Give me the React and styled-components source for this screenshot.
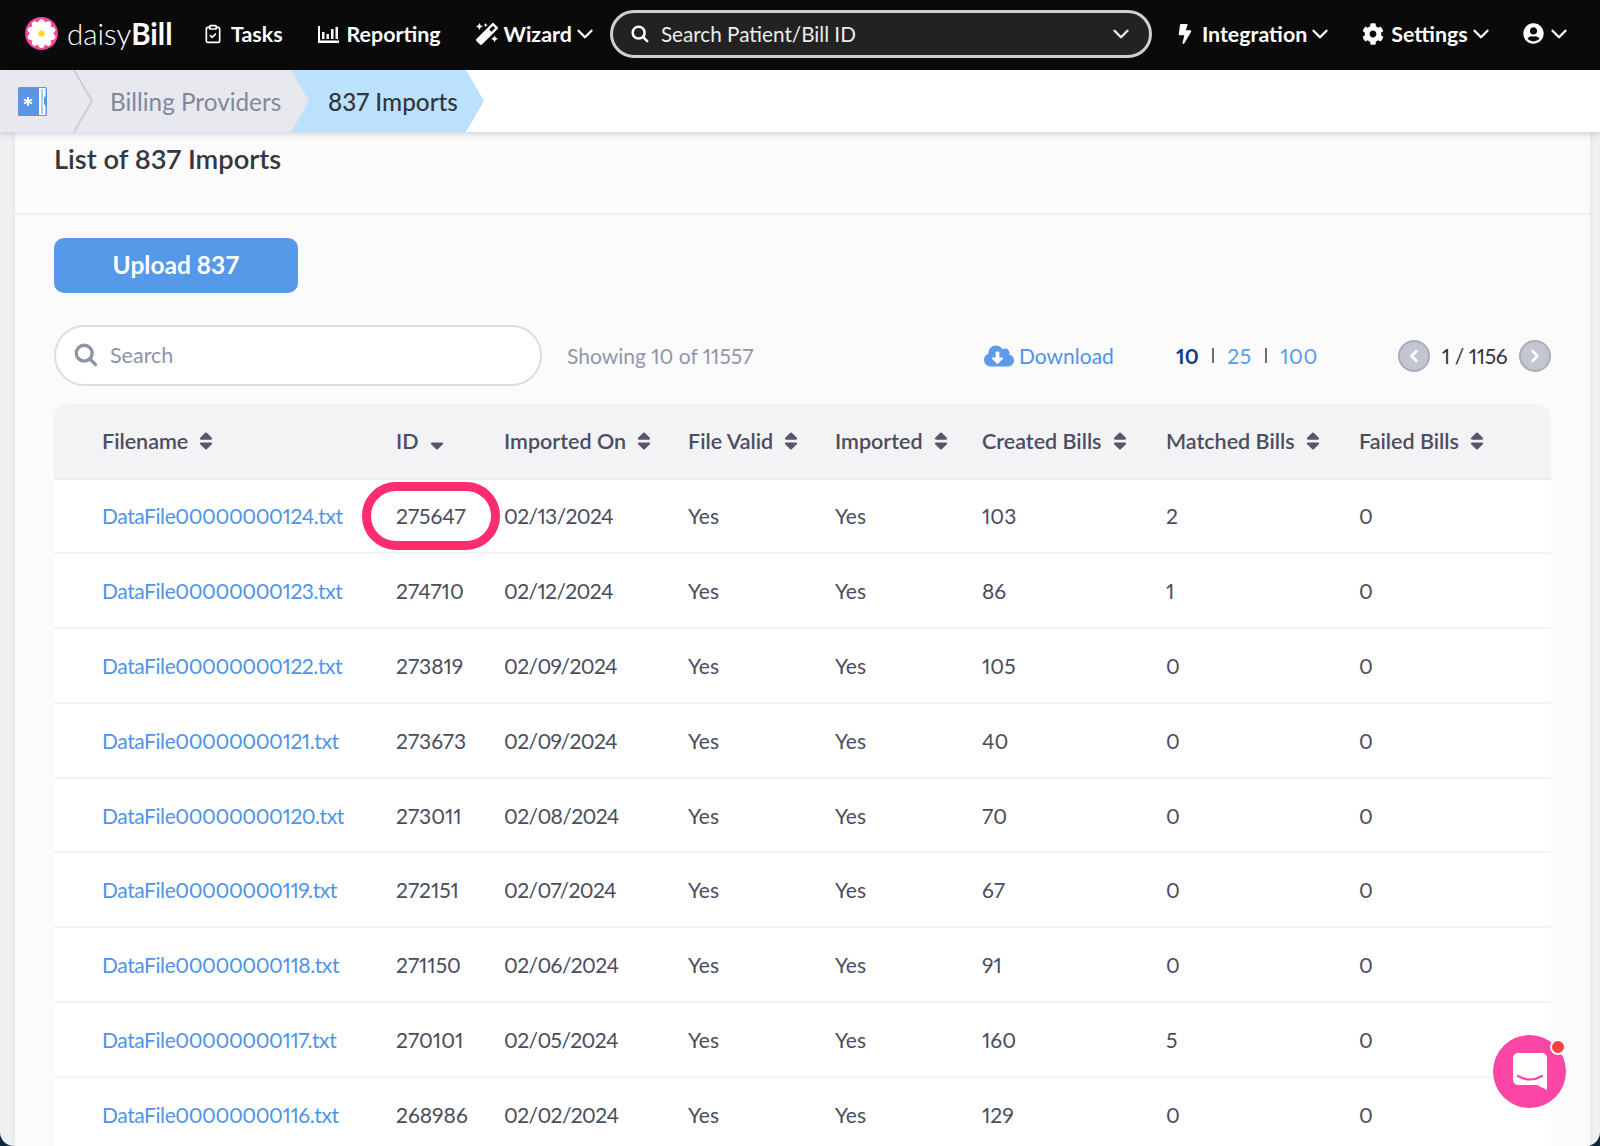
import React from "react";
import styled, { createGlobalStyle } from "styled-components";
import { ChevronDown, ChevronLeft, ChevronRight, ClipboardCheck } from "lucide-react";
import { FaBolt, FaCog, FaCloudDownloadAlt, FaMagic, FaSort, FaSortDown, FaUserCircle } from "react-icons/fa";

const FONT = `"Lato", "Open Sans", sans-serif`;

const GlobalStyle = createGlobalStyle`
    html, body {
        margin: 0;
        height: 1146px;
        overflow: hidden;
        background: #0c2a3e;
    }
    * { box-sizing: border-box; }
`;

const Screen = styled.div`
    width: 1600px;
    height: 1146px;
    position: relative;
    overflow: hidden;
    display: flex;
    flex-direction: column;
    font-family: ${FONT};
    font-variant-numeric: proportional-nums;
    background: #f0f0f3;
    border-radius: 0 0 14px 14px;
`;

const TopBar = styled.header`
    height: 70px;
    flex: none;
    background: #0a0a0a;
    display: flex;
    align-items: center;
    padding: 0 0 3px 25px;
    color: #fff;
`;

const Logo = styled.div`
    display: flex;
    align-items: center;
    width: 178px;
    flex: none;
`;

const LogoText = styled.span`
    font-size: 29.5px;
    font-weight: 300;
    margin-left: 9px;
    & b { font-weight: 700; }
`;

const NavItem = styled.div`
    display: flex;
    align-items: center;
    font-size: 21.4px;
    font-weight: 700;
    flex: none;
    margin-left: ${(p) => p.$left || 0}px;
    & svg { flex: none; }
    & > svg:first-child { margin-right: ${(p) => p.$gap ?? 8}px; }
`;

const NavCaret = styled(ChevronDown).attrs({ size: 26, strokeWidth: 2.2 })``;

const SearchBar = styled.div`
    width: 542px;
    height: 48px;
    flex: none;
    margin-left: 12px;
    border: 3px solid #cfcfcf;
    border-radius: 24px;
    background: #222;
    display: flex;
    align-items: center;
    padding: 0 15px 0 18px;
    gap: 12px;
    font-size: 20.7px;
    color: #ececec;
    & span { flex: 1; }
`;

const Crumbs = styled.nav`
    height: 62px;
    flex: none;
    background: #fff;
    display: flex;
    position: relative;
    z-index: 2;
    box-shadow: 0 2px 6px rgba(60, 60, 90, 0.22);
`;

const Crumb = styled.div`
    height: 100%;
    width: ${(p) => p.$width}px;
    margin-right: -18px;
    flex: none;
    position: relative;
    z-index: ${(p) => p.$z};
    padding-left: ${(p) => p.$pad}px;
    display: flex;
    align-items: center;
    font-size: 24.3px;
    color: ${(p) => (p.$active ? "#33343f" : "#83879c")};
    font-weight: ${(p) => (p.$active ? 500 : 400)};
    background: ${(p) => (p.$active ? "#bbe1fd" : p.$line ? "#c9ccd5" : "#e7e9ee")};
    clip-path: polygon(0 0, calc(100% - 18px) 0, 100% 50%, calc(100% - 18px) 100%, 0 100%);
    ${(p) => p.$line && `
        &::before {
            content: "";
            position: absolute;
            inset: 0 2px 0 0;
            background: #e7e9ee;
            clip-path: polygon(0 0, calc(100% - 18px) 0, 100% 50%, calc(100% - 18px) 100%, 0 100%);
        }
        & > * { position: relative; }
    `}
`;

const Card = styled.main`
    flex: 1;
    margin: 0 10px 0 15px;
    background: #fbfbfc;
    min-height: 0;
    box-shadow: 0 0 6px rgba(60, 60, 90, 0.08);
`;

const CardHead = styled.div`
    height: 83px;
    padding: 10px 0 0 39px;
    border-bottom: 2px solid #eeeef0;
`;

const Title = styled.h1`
    margin: 0;
    font-size: 27.3px;
    line-height: 34px;
    font-weight: 600;
    color: #35363f;
`;

const CardBody = styled.div`
    padding: 23px 39px 0;
`;

const UploadButton = styled.button`
    display: block;
    width: 244px;
    height: 55px;
    border: 0;
    border-radius: 10px;
    background: #5599e8;
    color: #fff;
    font-family: ${FONT};
    font-size: 24.5px;
    font-weight: 700;
    padding: 0 0 2px;
`;

const Toolbar = styled.div`
    display: flex;
    align-items: center;
    margin-top: 32px;
    height: 61px;
`;

const SearchBox = styled.div`
    width: 488px;
    height: 61px;
    flex: none;
    border: 2px solid #dcdce2;
    border-radius: 31px;
    background: #fff;
    display: flex;
    align-items: center;
    padding: 0 0 2px 18px;
    gap: 12px;
    font-size: 21.5px;
    color: #8f93a6;
`;

const Showing = styled.span`
    margin-left: 25px;
    width: 417px;
    flex: none;
    font-size: 21px;
    color: #9296a8;
`;

const DownloadLink = styled.a`
    display: flex;
    align-items: center;
    gap: 5px;
    width: 192px;
    flex: none;
    font-size: 21px;
    color: #4f94e8;
`;

const PageSizes = styled.div`
    display: flex;
    align-items: center;
    width: 222px;
    flex: none;
    font-size: 21px;
    color: #5a9cea;
`;

const PageSize = styled.span`
    color: ${(p) => (p.$current ? "#0d3f86" : "#5a9cea")};
    font-weight: ${(p) => (p.$current ? 700 : 400)};
    letter-spacing: ${(p) => (p.$current ? 0 : 0.6)}px;
`;

const Separator = styled.i`
    width: 1.5px;
    height: 15px;
    margin: 0 13.5px;
    background: #6a6d7c;
`;

const Pager = styled.div`
    display: flex;
    align-items: center;
    justify-content: space-between;
    flex: 1;
    font-size: 21px;
    letter-spacing: -0.4px;
    color: #33343f;
`;

const PagerButton = styled.span`
    width: 32px;
    height: 32px;
    flex: none;
    border-radius: 50%;
    background: #c3c6d0;
    border: 2px solid #a9acb9;
    color: #fff;
    display: flex;
    align-items: center;
    justify-content: center;
`;

const Table = styled.div`
    margin-top: 18px;
`;

const COLUMNS = "342px 108px 184px 147px 147px 184px 193px 1fr";

const HeadRow = styled.div`
    height: 75.5px;
    display: grid;
    grid-template-columns: ${COLUMNS};
    align-items: center;
    background: #f3f3f6;
    border-radius: 14px 14px 0 0;
    border-bottom: 2px solid #ececf0;
    font-size: 21.5px;
    font-weight: 600;
    color: #4b4d60;
`;

const HeadCell = styled.div`
    display: flex;
    align-items: center;
    gap: 7px;
    padding-left: ${(p) => (p.$first ? 48 : 0)}px;
    & svg { color: #55576a; }
`;

const Row = styled.div`
    height: 74.8px;
    display: grid;
    grid-template-columns: ${COLUMNS};
    align-items: center;
    background: #fff;
    border-bottom: 2px solid #f3f3f5;
    font-size: 21px;
    color: #4b4d5e;
`;

const FileLink = styled.a`
    padding-left: 48px;
    letter-spacing: -0.42px;
    color: #4f94e8;
`;

const DateCell = styled.div`
    letter-spacing: -0.6px;
`;

const IdCell = styled.div`
    position: relative;
`;

const Highlight = styled.span`
    position: absolute;
    left: -34px;
    top: 50%;
    transform: translateY(-50%);
    width: 138px;
    height: 68px;
    border: 9px solid #fb2d6e;
    border-radius: 34px;
    background: #fff;
`;

const IdText = styled.span`
    position: relative;
`;

const ChatButton = styled.div`
    position: absolute;
    left: 1493px;
    top: 1035px;
    width: 73px;
    height: 73px;
    border-radius: 50%;
    background: #fb46a5;
    display: flex;
    align-items: center;
    justify-content: center;
`;

const ChatDot = styled.span`
    position: absolute;
    right: 0;
    top: 4px;
    width: 16px;
    height: 16px;
    border-radius: 50%;
    background: #fa4040;
    border: 2px solid #fff;
`;

const rows = [
    ["DataFile00000000124.txt", "275647", "02/13/2024", "103", "2"],
    ["DataFile00000000123.txt", "274710", "02/12/2024", "86", "1"],
    ["DataFile00000000122.txt", "273819", "02/09/2024", "105", "0"],
    ["DataFile00000000121.txt", "273673", "02/09/2024", "40", "0"],
    ["DataFile00000000120.txt", "273011", "02/08/2024", "70", "0"],
    ["DataFile00000000119.txt", "272151", "02/07/2024", "67", "0"],
    ["DataFile00000000118.txt", "271150", "02/06/2024", "91", "0"],
    ["DataFile00000000117.txt", "270101", "02/05/2024", "160", "5"],
    ["DataFile00000000116.txt", "268986", "02/02/2024", "129", "0"],
];

const headers = ["Filename", "ID", "Imported On", "File Valid", "Imported", "Created Bills", "Matched Bills", "Failed Bills"];

const Daisy = () => (
    <svg width="33" height="33" viewBox="0 0 34 34">
        <circle cx="17" cy="17" r="17" fill="#f0489a" />
        {[0, 1, 2, 3, 4, 5, 6, 7, 8, 9].map((i) => (
            <ellipse key={i} cx="17" cy="8.5" rx="4" ry="6.5" fill="#fff" transform={`rotate(${i * 36} 17 17)`} />
        ))}
        <circle cx="17" cy="17" r="3.2" fill="#f9d71c" />
    </svg>
);

const BarsIcon = () => (
    <svg width="21" height="18" viewBox="0 0 21 18" fill="#fff">
        <rect x="0" y="1" width="2" height="17" />
        <rect x="0" y="15.5" width="21" height="2.5" />
        <rect x="4" y="7" width="2.5" height="7" />
        <rect x="8.5" y="9" width="2.5" height="5" />
        <rect x="13" y="4" width="2.5" height="10" />
        <rect x="17.5" y="2" width="2.5" height="12" />
    </svg>
);

const SearchIcon = ({ size, color }) => (
    <svg width={size} height={size} viewBox="0 0 20 20" fill="none" stroke={color} strokeWidth="2.8" strokeLinecap="round">
        <circle cx="8.5" cy="8.5" r="6.6" />
        <path d="M13.5 13.5 L18 18" />
    </svg>
);

const ProviderIcon = () => (
    <svg width="29" height="29" viewBox="0 0 29 29">
        <rect width="29" height="29" rx="1.5" fill="#5b96e6" />
        <path d="M21 1 H27.5 V9 L26 11 V17 L27.5 19 V28 H21 Z" fill="#fff" />
        <path d="M24 2 V27" stroke="#5b96e6" strokeWidth="1" />
        <path d="M10 10 V19 M6 12.5 L14 16.5 M14 12.5 L6 16.5" stroke="#fff" strokeWidth="1.8" />
    </svg>
);

const ChatIcon = () => (
    <svg width="34" height="37" viewBox="0 0 34 37">
        <path d="M5 0 H29 A5 5 0 0 1 34 5 V37 L24 32 H5 A5 5 0 0 1 0 27 V5 A5 5 0 0 1 5 0 Z" fill="#fff" />
        <path d="M5 23 Q17 30 29 23" fill="none" stroke="#fb46a5" strokeWidth="2.2" strokeLinecap="round" />
    </svg>
);

export default function App() {
    return <Screen>
        <GlobalStyle />
        <TopBar>
            <Logo>
                <Daisy />
                <LogoText>daisy<b>Bill</b></LogoText>
            </Logo>
            <NavItem><ClipboardCheck size={20} strokeWidth={2} />Tasks</NavItem>
            <NavItem $left={35}><BarsIcon />Reporting</NavItem>
            <NavItem $left={35} $gap={6}><FaMagic size={22} />Wizard<NavCaret /></NavItem>
            <SearchBar>
                <SearchIcon size={18} color="#fff" />
                <span>Search Patient/Bill ID</span>
                <ChevronDown size={26} strokeWidth={2.2} />
            </SearchBar>
            <NavItem $left={23} $gap={7}><FaBolt size={20} />Integration<NavCaret /></NavItem>
            <NavItem $left={29} $gap={7}><FaCog size={22} />Settings<NavCaret /></NavItem>
            <NavItem $left={29} $gap={2}><FaUserCircle size={21} /><NavCaret /></NavItem>
        </TopBar>
        <Crumbs>
            <Crumb $width={93} $z={3} $pad={18} $line><ProviderIcon /></Crumb>
            <Crumb $width={234} $z={2} $pad={35}>Billing Providers</Crumb>
            <Crumb $width={193} $z={1} $pad={37} $active>837 Imports</Crumb>
        </Crumbs>
        <Card>
            <CardHead>
                <Title>List of 837 Imports</Title>
            </CardHead>
            <CardBody>
                <UploadButton>Upload 837</UploadButton>
                <Toolbar>
                    <SearchBox><SearchIcon size={24} color="#8f93a6" /> Search</SearchBox>
                    <Showing>Showing 10 of 11557</Showing>
                    <DownloadLink><FaCloudDownloadAlt size={30} color="#5b9bea" /> Download</DownloadLink>
                    <PageSizes>
                        <PageSize $current>10</PageSize>
                        <Separator />
                        <PageSize>25</PageSize>
                        <Separator />
                        <PageSize>100</PageSize>
                    </PageSizes>
                    <Pager>
                        <PagerButton><ChevronLeft size={20} strokeWidth={3} /></PagerButton>
                        1 / 1156
                        <PagerButton><ChevronRight size={20} strokeWidth={3} /></PagerButton>
                    </Pager>
                </Toolbar>
                <Table>
                    <HeadRow>
                        {headers.map((h, i) => (
                            <HeadCell key={h} $first={i === 0}>
                                {h}
                                {h === "ID" ? <FaSortDown size={22} /> : <FaSort size={22} />}
                            </HeadCell>
                        ))}
                    </HeadRow>
                    {rows.map(([file, id, date, created, matched], i) => (
                        <Row key={id}>
                            <FileLink>{file}</FileLink>
                            <IdCell>
                                {i === 0 && <Highlight />}
                                <IdText>{id}</IdText>
                            </IdCell>
                            <DateCell>{date}</DateCell>
                            <div>Yes</div>
                            <div>Yes</div>
                            <div>{created}</div>
                            <div>{matched}</div>
                            <div>0</div>
                        </Row>
                    ))}
                </Table>
            </CardBody>
        </Card>
        <ChatButton>
            <ChatIcon />
            <ChatDot />
        </ChatButton>
    </Screen>;
}
